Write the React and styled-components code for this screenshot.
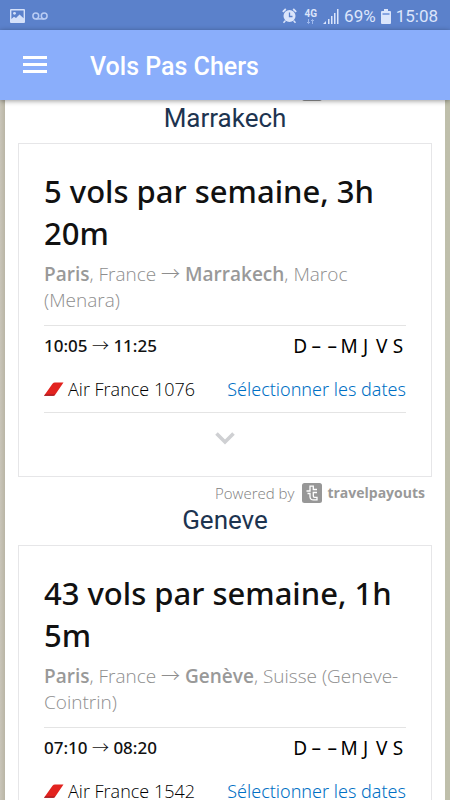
import styled, { createGlobalStyle } from "styled-components";

const GlobalStyle = createGlobalStyle`
  * {
    box-sizing: border-box;
  }
  body {
    margin: 0;
    background: #bfbcac;
    font-family: "Open Sans", "Noto Sans", sans-serif;
  }
  h1, h2, h3, p {
    margin: 0;
  }
`;

const flights = [
  {
    city: "Marrakech",
    summary: "5 vols par semaine, 3h 20m",
    from: "Paris",
    fromCountry: "France",
    to: "Marrakech",
    toCountry: "Maroc (Menara)",
    depart: "10:05",
    arrive: "11:25",
    number: "Air France 1076",
  },
  {
    city: "Geneve",
    summary: "43 vols par semaine, 1h 5m",
    from: "Paris",
    fromCountry: "France",
    to: "Genève",
    toCountry: "Suisse (Geneve-Cointrin)",
    depart: "07:10",
    arrive: "08:20",
    number: "Air France 1542",
  },
];

const days = ["D", "–", "–", "M", "J", "V", "S"];

const PictureIcon = () => (
  <svg width="15" height="14" viewBox="0 0 15 14" fill="#d5e1fa">
    <path
      fillRule="evenodd"
      d="M1 0h13a1 1 0 0 1 1 1v12a1 1 0 0 1-1 1H1a1 1 0 0 1-1-1V1a1 1 0 0 1 1-1zM1.400 1.400V10l2.600-2.200 2 1.200 3.500-3.500 4.100 3.700V1.400z"
    />
    <circle cx="4.500" cy="4.300" r="1.400" />
  </svg>
);

const VoicemailIcon = () => (
  <svg width="16" height="8" viewBox="0 0 16 8" fill="none" stroke="#b9ccf4" strokeWidth="1.500">
    <circle cx="3.800" cy="4" r="2.900" />
    <circle cx="12.200" cy="4" r="2.900" />
    <path d="M3.800 6.900h8.400" />
  </svg>
);

const AlarmIcon = () => (
  <svg width="15" height="16" viewBox="0 0 15 16" fill="none" stroke="#dbe5fb">
    <circle cx="7.500" cy="8" r="6" fill="#dbe5fb" stroke="none" />
    <path d="M.8 3.800L3.800 1M14.200 3.800L11.200 1" strokeWidth="1.800" />
    <path d="M3.300 12.800l-1.800 2M11.700 12.800l1.800 2" strokeWidth="1.500" />
    <path d="M7.500 4.500V8.500H10.500" stroke="#5b81cb" strokeWidth="1.300" />
  </svg>
);

const DataArrows = () => (
  <svg width="9" height="5" viewBox="0 0 9 5" fill="none" stroke="#9db7ec" strokeWidth="1">
    <path d="M2.500 0v4.500M1 3l1.500 1.500L4 3M6.500 5V.5M5 2L6.500.5 8 2" />
  </svg>
);

const SignalIcon = () => (
  <svg width="16" height="15" viewBox="0 0 16 15" fill="#dbe5fb">
    <path d="M0 15l3-3v3zM5 10h1.500v5H5zM8 7h1.500v8H8zM11 4h1.500v11H11zM14 0h1.500v15H14z" />
  </svg>
);

const BatteryIcon = () => (
  <svg width="10" height="15" viewBox="0 0 10 15">
    <path fill="#dbe5fb" d="M3 0h4v2h2a1 1 0 0 1 1 1v11a1 1 0 0 1-1 1H1a1 1 0 0 1-1-1V3a1 1 0 0 1 1-1h2z" />
    <path fill="#86a4e1" d="M1.500 4h7v2h-7z" />
  </svg>
);

const AirFranceLogo = () => (
  <svg width="20" height="14" viewBox="0 0 20 14">
    <path fill="#e2231f" d="M0 13.800L8.500 1.800Q9.500.5 11 .5H19.500L11.500 12.300Q10.500 13.800 9 13.800z" />
    <path fill="#9d1c24" d="M0 13.800L1.200 12.600H11.300Q10.500 13.800 9 13.800z" />
  </svg>
);

const ChevronIcon = () => (
  <svg width="20" height="13" viewBox="0 0 20 13" fill="none" stroke="#cfd0d3" strokeWidth="3.600">
    <path d="M1.500 1.500l8.500 8.500 8.500-8.500" />
  </svg>
);

const TravelpayoutsLogo = () => (
  <svg width="20" height="20" viewBox="0 0 20 20" fill="none">
    <rect width="20" height="20" rx="2.500" fill="#979797" />
    <path
      stroke="#fff"
      strokeWidth="1.300"
      d="M4.500 8H8V3.200H11.300V6.500H15M15 9.500H11.300V13Q11.300 14.300 12.600 14.300H15V16.900H11.600Q8 16.900 8 13.400V10.500H5.500"
    />
  </svg>
);

const PoweredBy = () => (
  <Powered href="#travelpayouts">
    Powered by
    <TravelpayoutsLogo />
    <Brand>travelpayouts</Brand>
  </Powered>
);

const FlightCard = ({ flight }) => (
  <section>
    <City>{flight.city}</City>
    <Card>
      <Summary>{flight.summary}</Summary>
      <Route>
        <b>{flight.from}</b>, {flight.fromCountry} <Arrow>→</Arrow> <b>{flight.to}</b>,{" "}
        {flight.toCountry}
      </Route>
      <Details>
        <Row>
          <Times>
            {flight.depart} <Arrow>→</Arrow> {flight.arrive}
          </Times>
          <Days>
            {days.map((day, i) => (
              <Day key={i}>{day}</Day>
            ))}
          </Days>
        </Row>
        <Row>
          <Airline>
            <AirFranceLogo />
            {flight.number}
          </Airline>
          <DatesLink href="#dates">Sélectionner les dates</DatesLink>
        </Row>
      </Details>
      <MoreButton type="button" aria-label="Plus">
        <ChevronIcon />
      </MoreButton>
    </Card>
    <PoweredBy />
  </section>
);

const App = () => {
  return (
    <>
      <GlobalStyle />
      <Screen>
        <StatusBar>
          <PictureIcon />
          <VoicemailIcon />
          <StatusRight>
            <AlarmIcon />
            <Network>
              4G
              <DataArrows />
            </Network>
            <SignalIcon />
            <span>69%</span>
            <BatteryIcon />
            <span>15:08</span>
          </StatusRight>
        </StatusBar>
        <AppBar>
          <MenuButton type="button" aria-label="Menu">
            <span />
            <span />
            <span />
          </MenuButton>
          <AppTitle>Vols Pas Chers</AppTitle>
        </AppBar>
        <Scroll>
          <Page>
            <PreviousEnd>
              <TravelpayoutsLogo />
            </PreviousEnd>
            {flights.map((flight) => (
              <FlightCard key={flight.city} flight={flight} />
            ))}
          </Page>
        </Scroll>
      </Screen>
    </>
  );
};

const Screen = styled.div`
  display: flex;
  flex-direction: column;
  height: 100vh;
  overflow: hidden;
`;

const StatusBar = styled.div`
  display: flex;
  align-items: center;
  flex-shrink: 0;
  gap: 7px;
  height: 30px;
  padding: 2px 12px 0 10px;
  background: #5b81cb;
  color: #dbe5fb;
  font-family: Roboto, sans-serif;
  font-size: 17px;
  position: relative;
  z-index: 2;
`;

const StatusRight = styled.div`
  display: flex;
  align-items: center;
  gap: 5px;
  margin-left: auto;
`;

const Network = styled.div`
  display: flex;
  flex-direction: column;
  align-items: center;
  margin: 0 1px 0 3px;
  font-size: 10px;
  font-weight: 700;
  line-height: 10px;
`;

const AppBar = styled.header`
  display: flex;
  align-items: center;
  flex-shrink: 0;
  gap: 43px;
  height: 70px;
  padding: 2px 23px 0;
  background: #8aaefb;
  box-shadow: 0 1px 5px rgba(0, 0, 0, 0.4);
  position: relative;
  z-index: 2;
`;

const MenuButton = styled.button`
  display: flex;
  flex-direction: column;
  gap: 4px;
  width: 24px;
  padding: 0 0 4px;
  border: none;
  background: none;
  cursor: pointer;
  span {
    height: 3px;
    background: #fff;
  }
`;

const AppTitle = styled.h1`
  color: #fff;
  font-family: Roboto, sans-serif;
  font-size: 25px;
  font-weight: 500;
`;

const Scroll = styled.main`
  flex: 1;
  min-height: 0;
  overflow-y: auto;
  padding: 0 5px;
  background: linear-gradient(90deg, #c9c5b9, #b9b5a5 5px, #bfbfab);
  scrollbar-width: none;
`;

/* the end of the previous result stays under the app bar */
const Page = styled.div`
  margin-top: -25px;
  padding: 0 13px;
  background: #fff;
`;

const PreviousEnd = styled.div`
  display: flex;
  align-items: flex-end;
  justify-content: flex-end;
  height: 30px;
  padding: 0 110px 4px 0;
`;

const City = styled.h2`
  margin-bottom: 12px;
  color: #1d3450;
  font-family: Roboto, sans-serif;
  font-size: 26px;
  font-weight: 400;
  line-height: 26px;
  text-align: center;
`;

const Card = styled.div`
  padding: 26px 25px 0;
  border: 1px solid #e6e6e8;
`;

const Summary = styled.h3`
  color: #111;
  font-family: "Noto Sans", sans-serif;
  font-size: 31px;
  font-weight: 500;
  line-height: 42px;
`;

const Route = styled.p`
  margin-top: 7px;
  color: #8e8e8e;
  font-size: 19px;
  font-weight: 300;
  line-height: 26px;
  b {
    color: #999;
    font-weight: 600;
  }
`;

const Arrow = styled.span`
  font-family: "Noto Sans CJK JP", sans-serif;
  font-weight: 300;
  line-height: 1;
`;

const Details = styled.div`
  margin-top: 12px;
  border: solid #e4e4e4;
  border-width: 1px 0;
`;

const Row = styled.div`
  display: flex;
  align-items: center;
  justify-content: space-between;
  height: 43px;
  padding-bottom: 4px;
`;

const Times = styled.div`
  color: #111;
  font-family: "Noto Sans", sans-serif;
  font-size: 17px;
  font-weight: 500;
`;

const Days = styled.div`
  display: flex;
  width: 114px;
`;

const Day = styled.span`
  flex: 1;
  color: #000;
  font-family: "Noto Sans", sans-serif;
  font-size: 19px;
  font-weight: 400;
  text-align: center;
`;

const Airline = styled.div`
  display: flex;
  align-items: center;
  gap: 4px;
  color: #000;
  font-size: 18px;
  font-weight: 300;
`;

const DatesLink = styled.a`
  color: #0070c4;
  font-family: "Noto Sans", sans-serif;
  font-size: 18px;
  font-weight: 300;
  text-decoration: none;
`;

const MoreButton = styled.button`
  display: flex;
  align-items: center;
  justify-content: center;
  width: 100%;
  height: 63px;
  padding: 0 0 12px;
  border: none;
  background: none;
  cursor: pointer;
`;

const Powered = styled.a`
  display: flex;
  align-items: center;
  justify-content: flex-end;
  gap: 8px;
  height: 30px;
  padding: 1px 7px 0 0;
  color: #808080;
  font-size: 15px;
  font-weight: 300;
  text-decoration: none;
`;

const Brand = styled.span`
  margin-left: -3px;
  color: #999;
  font-size: 14px;
  font-weight: 700;
`;

export default App;
